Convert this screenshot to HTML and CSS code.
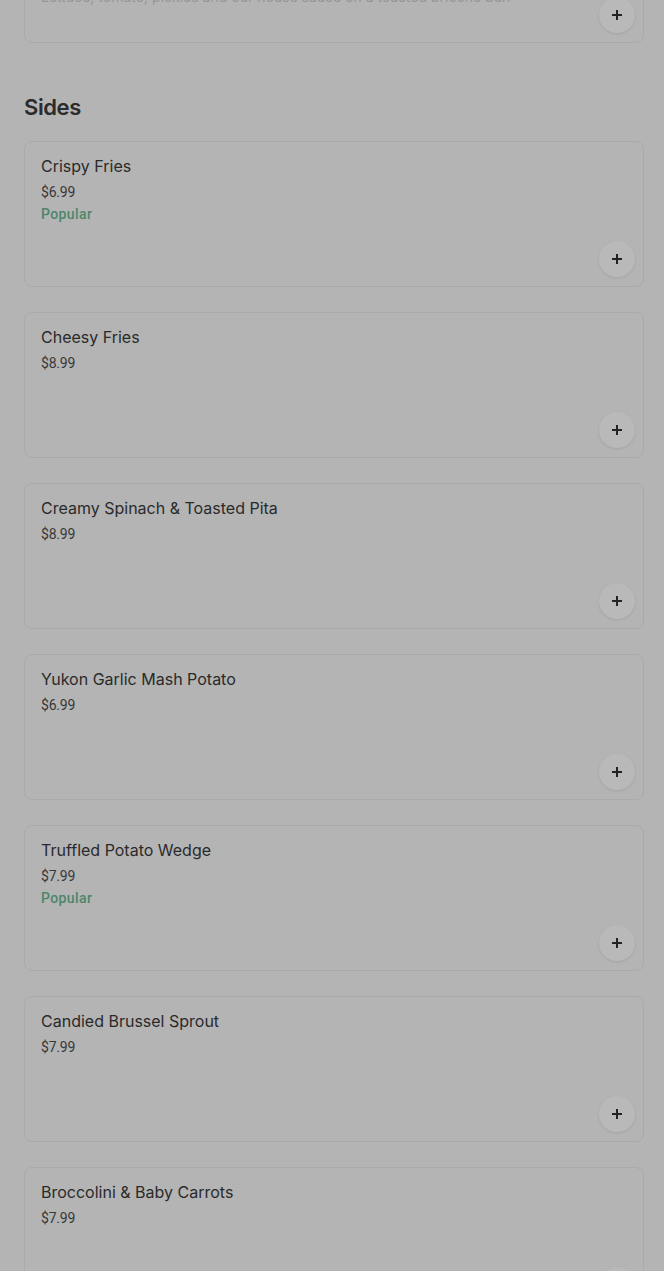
FILE: index.html
```html
<!DOCTYPE html>
<html lang="en">
  <head>
    <meta charset="UTF-8" />
    <meta name="viewport" content="width=device-width, initial-scale=1.0" />
    <title>Menu</title>
    <link rel="stylesheet" href="styles.css">
  </head>
  <body>
    <div class="menu">
      <!-- last card of the previous section, scrolled mostly out of view -->
      <div class="card">
        <div class="info">
          <div class="name">Grilled Chicken Sandwich</div>
          <div class="price">$14.99</div>
          <div class="desc">Lettuce, tomato, pickles and our house sauce on a toasted brioche bun</div>
        </div>
        <button class="add"><svg viewBox="0 0 12 12"><path d="M6 1v10M1 6h10" /></svg></button>
      </div>

      <h2 class="section">Sides</h2>

      <div class="list">
        <div class="card">
          <div class="info">
            <div class="name">Crispy Fries</div>
            <div class="price">$6.99</div>
            <div class="tag">Popular</div>
          </div>
          <button class="add"><svg viewBox="0 0 12 12"><path d="M6 1v10M1 6h10" /></svg></button>
        </div>
        <div class="card">
          <div class="info">
            <div class="name">Cheesy Fries</div>
            <div class="price">$8.99</div>
          </div>
          <button class="add"><svg viewBox="0 0 12 12"><path d="M6 1v10M1 6h10" /></svg></button>
        </div>
        <div class="card">
          <div class="info">
            <div class="name">Creamy Spinach &amp; Toasted Pita</div>
            <div class="price">$8.99</div>
          </div>
          <button class="add"><svg viewBox="0 0 12 12"><path d="M6 1v10M1 6h10" /></svg></button>
        </div>
        <div class="card">
          <div class="info">
            <div class="name">Yukon Garlic Mash Potato</div>
            <div class="price">$6.99</div>
          </div>
          <button class="add"><svg viewBox="0 0 12 12"><path d="M6 1v10M1 6h10" /></svg></button>
        </div>
        <div class="card">
          <div class="info">
            <div class="name">Truffled Potato Wedge</div>
            <div class="price">$7.99</div>
            <div class="tag">Popular</div>
          </div>
          <button class="add"><svg viewBox="0 0 12 12"><path d="M6 1v10M1 6h10" /></svg></button>
        </div>
        <div class="card">
          <div class="info">
            <div class="name">Candied Brussel Sprout</div>
            <div class="price">$7.99</div>
          </div>
          <button class="add"><svg viewBox="0 0 12 12"><path d="M6 1v10M1 6h10" /></svg></button>
        </div>
        <div class="card">
          <div class="info">
            <div class="name">Broccolini &amp; Baby Carrots</div>
            <div class="price">$7.99</div>
          </div>
          <button class="add"><svg viewBox="0 0 12 12"><path d="M6 1v10M1 6h10" /></svg></button>
        </div>
      </div>
    </div>
  </body>
</html>
```

FILE: styles.css
```css
body {
  margin: 0;
  background: #b4b4b4;
  font-family: Inter, Roboto, "Liberation Sans", sans-serif;
  color: #2c2c2c;
}
.menu {
  margin-top: -103px;
  padding: 0 20px 40px 24px;
}
.section {
  margin: 50px 0 20px;
  font-size: 22px;
  line-height: 28px;
  font-weight: 600;
  letter-spacing: -0.4px;
  color: #2b2b2b;
}
.list {
  display: flex;
  flex-direction: column;
  gap: 25px;
}
.card {
  box-sizing: border-box;
  height: 146px;
  border: solid 1px #aaaaaa;
  border-radius: 8px;
  padding: 14px 8px 9px 16px;
  display: flex;
  flex-direction: column;
  overflow: hidden;
}
.info {
  flex: 1;
  min-height: 0;
}
.name {
  font-size: 16px;
  line-height: 20px;
  font-weight: 400;
  color: #2a2a2a;
}
.price {
  margin-top: 6px;
  font-family: Roboto, sans-serif;
  font-size: 14px;
  line-height: 20px;
  color: #383838;
  letter-spacing: -0.2px;
}
.tag {
  margin-top: 2px;
  font-family: Roboto, sans-serif;
  font-size: 14px;
  line-height: 20px;
  font-weight: 500;
  letter-spacing: 0.4px;
  color: #4d866a;
}
.desc {
  margin-top: 30px;
  white-space: nowrap;
  font-size: 14px;
  line-height: 18px;
  color: #969696;
}
.add {
  flex-shrink: 0;
  align-self: flex-end;
  width: 36px;
  height: 36px;
  padding: 0;
  border: none;
  border-radius: 50%;
  background: #b9b9b9;
  box-shadow: 0 1px 3px rgba(0, 0, 0, 0.09);
  display: flex;
  align-items: center;
  justify-content: center;
}
.add svg {
  width: 12px;
  height: 12px;
  stroke: #222;
  stroke-width: 2;
  fill: none;
}
```
